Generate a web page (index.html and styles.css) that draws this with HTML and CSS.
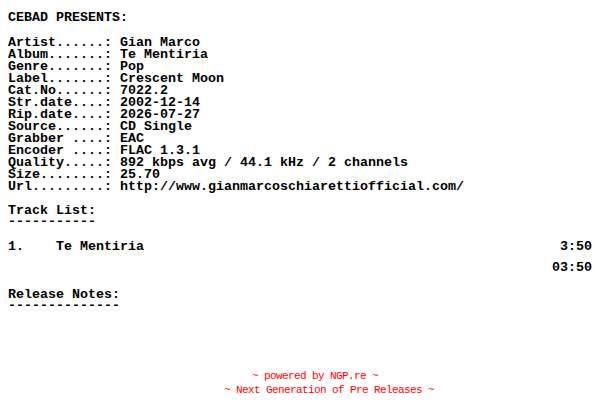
FILE: index.html
```html
<!DOCTYPE html>
<html lang="en">
<head>
<meta charset="utf-8">
<title>CEBAD PRESENTS</title>
<link rel="stylesheet" href="styles.css">
</head>
<body>
<div class="nfo">
  <div class="line hdr">CEBAD PRESENTS:</div>
  <div class="info">
    <div class="line">Artist......: Gian Marco</div>
    <div class="line">Album.......: Te Mentiria</div>
    <div class="line">Genre.......: Pop</div>
    <div class="line">Label.......: Crescent Moon</div>
    <div class="line">Cat.No......: 7022.2</div>
    <div class="line">Str.date....: 2002-12-14</div>
    <div class="line">Rip.date....: 2026-07-27</div>
    <div class="line">Source......: CD Single</div>
    <div class="line">Grabber ....: EAC</div>
    <div class="line">Encoder ....: FLAC 1.3.1</div>
    <div class="line">Quality.....: 892 kbps avg / 44.1 kHz / 2 channels</div>
    <div class="line">Size........: 25.70</div>
    <div class="line">Url.........: http://www.gianmarcoschiarettiofficial.com/</div>
  </div>
  <div class="section tracks-title">
    <div class="line">Track List:</div>
    <div class="line dashes">-----------</div>
  </div>
  <div class="track">
    <span class="num">1.</span>
    <span class="title">Te Mentiria</span>
    <span class="time">3:50</span>
  </div>
  <div class="total">03:50</div>
  <div class="section notes-title">
    <div class="line">Release Notes:</div>
    <div class="line dashes">--------------</div>
  </div>
</div>
<div class="footer">
  <div class="foot foot-1">~ powered by NGP.re ~</div>
  <div class="foot foot-2">~ Next Generation of Pre Releases ~</div>
</div>
</body>
</html>
```

FILE: styles.css
```css
html, body {
  background: #ffffff;
}
body {
  margin: 8px;
  color: #000000;
  font-family: "Liberation Mono", "DejaVu Sans Mono", monospace;
  font-weight: bold;
  font-size: 13.333px;
  line-height: 12px;
}
.line {
  white-space: pre;
  height: 12px;
}
.hdr {
  margin-top: 4px;
}
.info {
  margin-top: 13px;
}
.tracks-title {
  margin-top: 12px;
}
.dashes {
  height: 10px;
  line-height: 10px;
}
.track {
  display: flex;
  margin-top: 14px;
  height: 12px;
}
.num {
  width: 48px;
  flex: none;
}
.title {
  flex: 1;
}
.time {
  flex: none;
}
.total {
  text-align: right;
  margin-top: 9px;
  height: 12px;
}
.notes-title {
  margin-top: 15px;
}
.footer {
  margin-top: 58px;
  color: #ff0000;
  font-weight: normal;
  font-size: 11px;
  letter-spacing: -0.6px;
  line-height: 14px;
}
.foot {
  white-space: pre;
}
.foot-1 {
  padding-left: 244px;
}
.foot-2 {
  padding-left: 216px;
}
```
